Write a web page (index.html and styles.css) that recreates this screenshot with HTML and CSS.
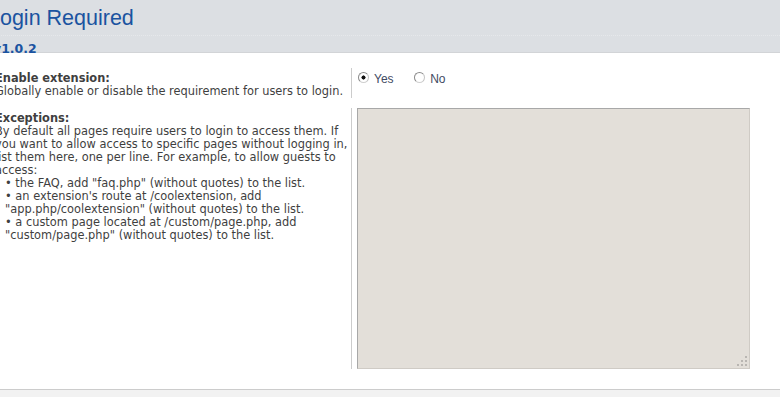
FILE: index.html
```html
<!DOCTYPE html>
<html lang="en">
<head>
    <meta charset="UTF-8">
    <title>Login Required</title>
    <link rel="stylesheet" href="styles.css">
</head>
<body>
    <div class="page-header">
        <h1>Login Required</h1>
        <p class="version">v1.0.2</p>
    </div>

    <div class="page-body">
        <dl class="setting">
            <dt>
                <label class="setting-title" for="enable_yes">Enable extension:</label>
                <span class="setting-explain">Globally enable or disable the requirement for users to login.</span>
            </dt>
            <dd class="radio-cell">
                <label class="radio-label"><input type="radio" name="enable" id="enable_yes" checked> Yes</label>
                <label class="radio-label"><input type="radio" name="enable"> No</label>
            </dd>
        </dl>

        <dl class="setting">
            <dt>
                <label class="setting-title" for="exceptions">Exceptions:</label>
                <span class="setting-explain">By default all pages require users to login to access them. If you want to allow access to specific pages without logging in, list them here, one per line. For example, to allow guests to access:</span>
                <ul class="example-list">
                    <li>&bull; the FAQ, add "faq.php" (without quotes) to the list.</li>
                    <li>&bull; an extension's route at /coolextension, add "app.php/coolextension" (without quotes) to the list.</li>
                    <li>&bull; a custom page located at /custom/page.php, add "custom/page.php" (without quotes) to the list.</li>
                </ul>
            </dt>
            <dd>
                <div class="textarea-wrap">
                    <textarea id="exceptions" class="exceptions-field"></textarea>
                    <svg class="grip" width="10" height="10" viewBox="0 0 10 10">
                        <rect x="8" y="0" width="2" height="2" fill="#b9b6b2"/>
                        <rect x="4" y="4" width="2" height="2" fill="#b9b6b2"/>
                        <rect x="8" y="4" width="2" height="2" fill="#b9b6b2"/>
                        <rect x="0" y="8" width="2" height="2" fill="#b9b6b2"/>
                        <rect x="4" y="8" width="2" height="2" fill="#b9b6b2"/>
                        <rect x="8" y="8" width="2" height="2" fill="#b9b6b2"/>
                    </svg>
                </div>
            </dd>
        </dl>
    </div>

    <div class="page-footer"></div>
</body>
</html>
```

FILE: styles.css
```css
body {
    margin: 0;
    background-color: #FFFFFF;
    font-family: 'DejaVu Sans', Verdana, sans-serif;
    font-size: 11.4px;
    color: #3F3F3F;
    overflow: hidden;
}

.page-header {
    height: 52px;
    background-color: #DCDFE3;
    border-bottom: 1px solid #D2D4D7;
    margin-left: -12px;
}

h1 {
    margin: 0;
    padding-top: 5px;
    height: 30px;
    font-family: 'Liberation Sans', Arial, sans-serif;
    font-size: 21.5px;
    font-weight: 400;
    line-height: 26px;
    color: #1A53A0;
    border-bottom: 1px dotted #E6E8EB;
}

.version {
    margin: 0;
    padding-left: 5px;
    padding-top: 5px;
    font-weight: 700;
    font-size: 12.5px;
    line-height: 15px;
    color: #1A53A0;
}

.page-body {
    height: 336px;
    padding-top: 15px;
    box-sizing: border-box;
}

.setting {
    display: grid;
    grid-template-columns: 356px 1fr;
    margin: 0 0 10px -5px;
}

.setting dt {
    padding: 4px 2px 0 0;
}

.setting dd {
    margin: 0;
    padding-left: 5px;
    border-left: 1px solid #CCCCCC;
}

.setting-title {
    display: block;
    font-weight: 700;
    line-height: 13px;
}

.setting-explain {
    display: block;
    line-height: 13px;
}

.example-list {
    margin: 0;
    padding: 0 0 0 10px;
    list-style: none;
    line-height: 13px;
}

.radio-cell {
    padding-top: 4px;
}

.radio-label {
    display: inline-flex;
    align-items: center;
    margin-right: 16px;
    font-family: 'Liberation Sans', Arial, sans-serif;
    font-size: 12px;
    color: #3F4B63;
}

.radio-label input {
    appearance: none;
    -webkit-appearance: none;
    width: 11px;
    height: 11px;
    margin: 0 5px 0 1px;
    border: 1px solid #8A8A8A;
    border-bottom-color: #D0D0D0;
    border-right-color: #C4C4C4;
    border-radius: 50%;
    background-color: #FFFFFF;
    box-sizing: border-box;
    position: relative;
    top: -2px;
}

.radio-label input:checked {
    background: radial-gradient(circle, #111111 0, #111111 1.8px, #FFFFFF 2.3px);
}

.textarea-wrap {
    position: relative;
    width: 393px;
    height: 261px;
}

.exceptions-field {
    display: block;
    width: 100%;
    height: 100%;
    margin: 0;
    box-sizing: border-box;
    background-color: #E3DFD9;
    border: 1px solid #A8A8A8;
    border-right-color: #CFCBC5;
    border-bottom-color: #CFCBC5;
    resize: none;
    outline: none;
}

.grip {
    position: absolute;
    right: 3px;
    bottom: 3px;
}

.page-footer {
    height: 24px;
    background-color: #F2F2F2;
    border-top: 1px solid #CCCCCC;
}
```
